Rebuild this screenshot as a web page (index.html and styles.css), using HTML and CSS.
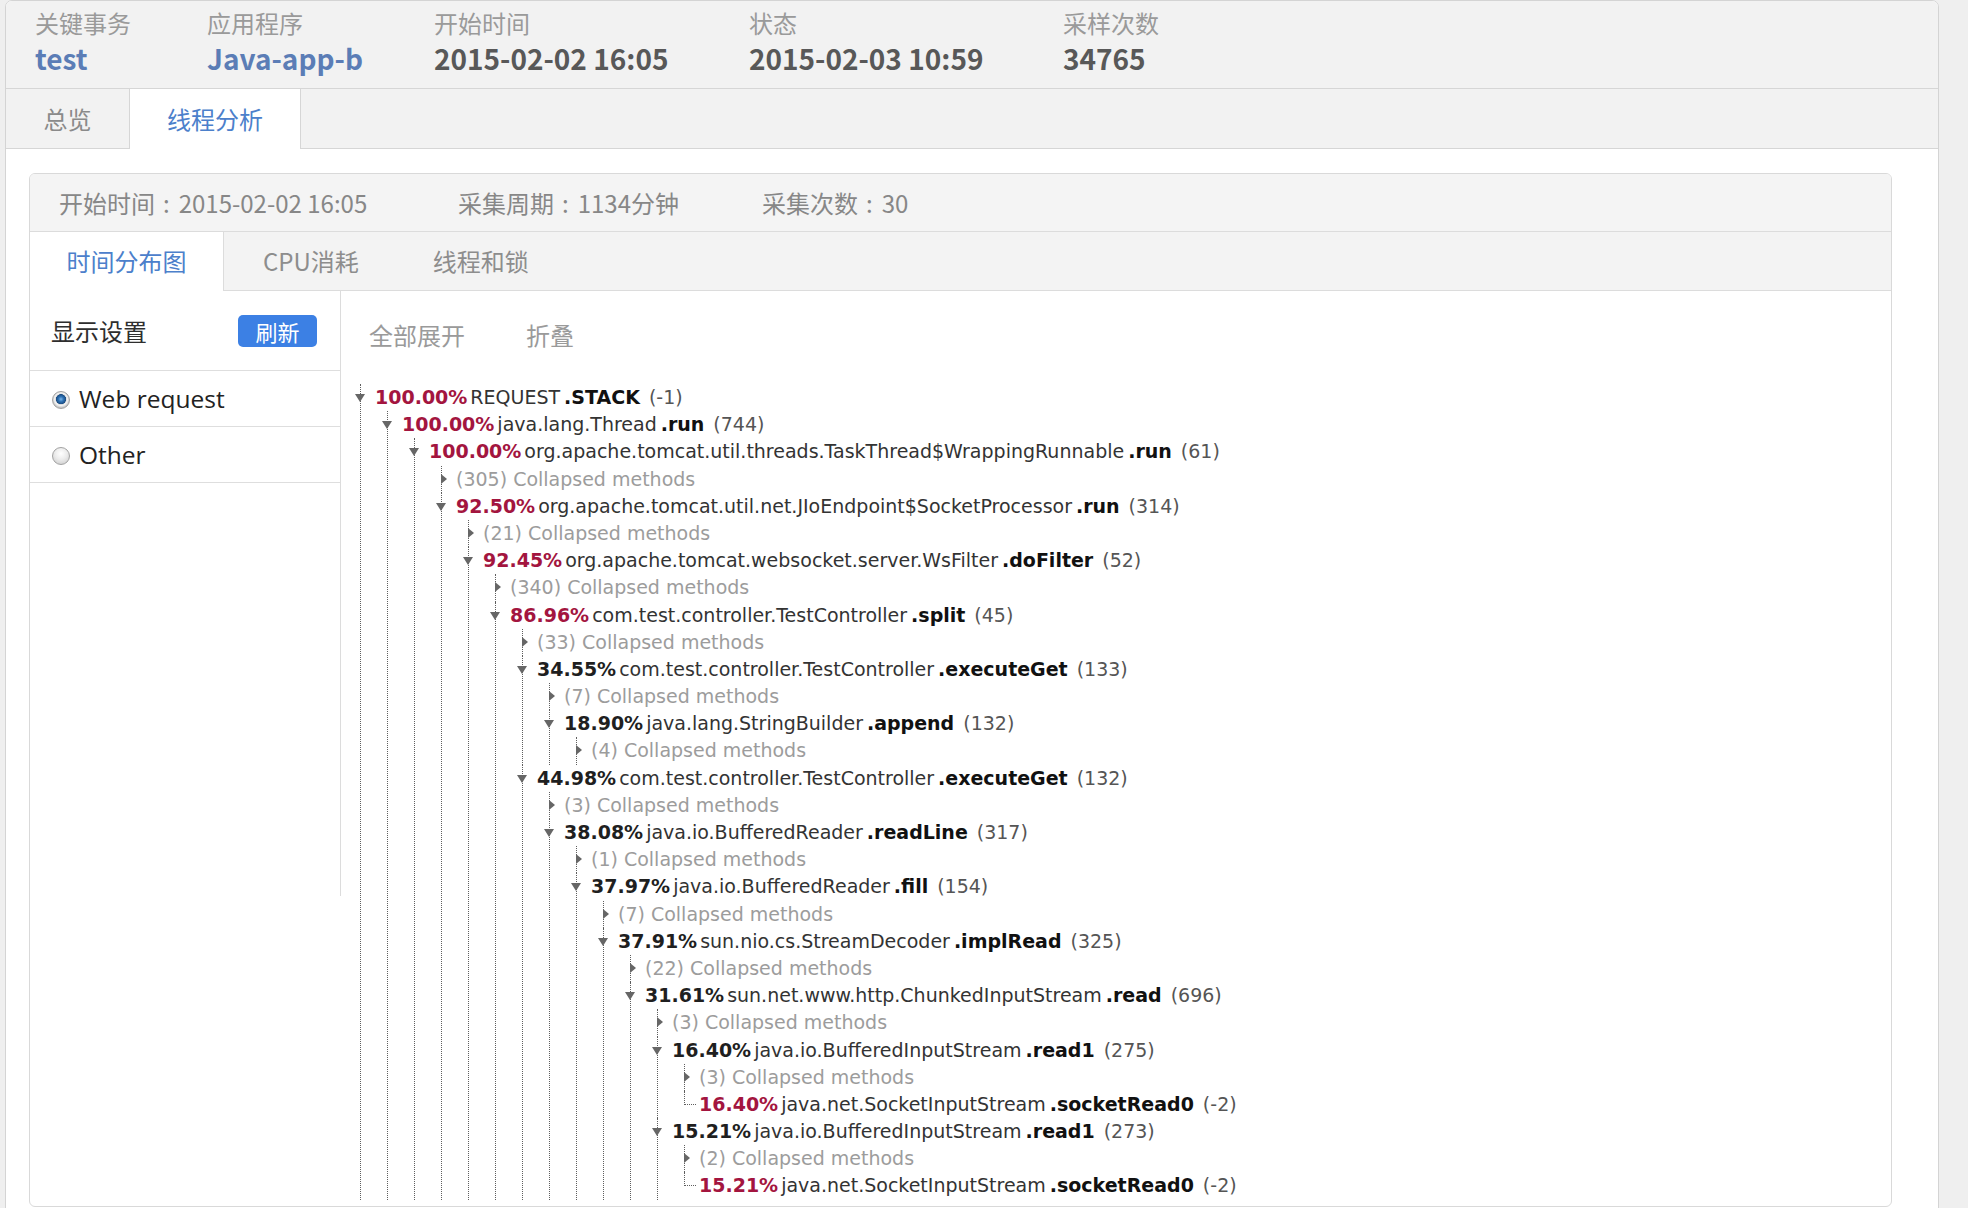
FILE: index.html
```html
<!DOCTYPE html>
<html lang="zh">
<head>
<meta charset="utf-8">
<title>线程分析</title>
<link rel="stylesheet" href="styles.css">
</head>
<body>
<div class="app">
  <div class="summary">
    <div class="sum-col c1"><div class="sum-label">关键事务</div><div class="sum-value link">test</div></div>
    <div class="sum-col c2"><div class="sum-label">应用程序</div><div class="sum-value link">Java-app-b</div></div>
    <div class="sum-col c3"><div class="sum-label">开始时间</div><div class="sum-value">2015-02-02 16:05</div></div>
    <div class="sum-col c4"><div class="sum-label">状态</div><div class="sum-value">2015-02-03 10:59</div></div>
    <div class="sum-col c5"><div class="sum-label">采样次数</div><div class="sum-value">34765</div></div>
  </div>
  <div class="tabs">
    <div class="tab t1">总览</div>
    <div class="tab t2 active">线程分析</div>
  </div>
  <div class="content">
    <div class="panel">
      <div class="info">
        <span class="info-item i1">开始时间<span class="sep">:</span>2015-02-02 16:05</span>
        <span class="info-item i2">采集周期<span class="sep">:</span>1134分钟</span>
        <span class="info-item">采集次数<span class="sep">:</span>30</span>
      </div>
      <div class="subtabs">
        <div class="subtab active">时间分布图</div>
        <div class="subtab first">CPU消耗</div>
        <div class="subtab">线程和锁</div>
      </div>
      <div class="pbody">
        <div class="side">
          <div class="side-head"><span class="side-title">显示设置</span><span class="btn">刷新</span></div>
          <div class="opt"><span class="radio on"></span><span class="opt-text">Web request</span></div>
          <div class="opt"><span class="radio"></span><span class="opt-text">Other</span></div>
        </div>
        <div class="main">
          <div class="toolbar"><span>全部展开</span><span>折叠</span></div>
          <ul class="tree">
            <li><div class="row"><i class="tw dn"></i><b class="pct r">100.00%</b><span class="cls">REQUEST</span><b class="mth">.STACK</b><span class="cnt">(-1)</span></div>
              <ul>
                <li><div class="row"><i class="tw dn"></i><b class="pct r">100.00%</b><span class="cls">java.lang.Thread</span><b class="mth">.run</b><span class="cnt">(744)</span></div>
                  <ul>
                    <li><div class="row"><i class="tw dn"></i><b class="pct r">100.00%</b><span class="cls">org.apache.tomcat.util.threads.TaskThread$WrappingRunnable</span><b class="mth">.run</b><span class="cnt">(61)</span></div>
                      <ul>
                        <li><div class="row"><i class="tw rt"></i><span class="col">(305) Collapsed methods</span></div></li>
                        <li><div class="row"><i class="tw dn"></i><b class="pct r">92.50%</b><span class="cls">org.apache.tomcat.util.net.JIoEndpoint$SocketProcessor</span><b class="mth">.run</b><span class="cnt">(314)</span></div>
                          <ul>
                            <li><div class="row"><i class="tw rt"></i><span class="col">(21) Collapsed methods</span></div></li>
                            <li><div class="row"><i class="tw dn"></i><b class="pct r">92.45%</b><span class="cls">org.apache.tomcat.websocket.server.WsFilter</span><b class="mth">.doFilter</b><span class="cnt">(52)</span></div>
                              <ul>
                                <li><div class="row"><i class="tw rt"></i><span class="col">(340) Collapsed methods</span></div></li>
                                <li><div class="row"><i class="tw dn"></i><b class="pct r">86.96%</b><span class="cls">com.test.controller.TestController</span><b class="mth">.split</b><span class="cnt">(45)</span></div>
                                  <ul>
                                    <li><div class="row"><i class="tw rt"></i><span class="col">(33) Collapsed methods</span></div></li>
                                    <li><div class="row"><i class="tw dn"></i><b class="pct">34.55%</b><span class="cls">com.test.controller.TestController</span><b class="mth">.executeGet</b><span class="cnt">(133)</span></div>
                                      <ul>
                                        <li><div class="row"><i class="tw rt"></i><span class="col">(7) Collapsed methods</span></div></li>
                                        <li><div class="row"><i class="tw dn"></i><b class="pct">18.90%</b><span class="cls">java.lang.StringBuilder</span><b class="mth">.append</b><span class="cnt">(132)</span></div>
                                          <ul>
                                            <li><div class="row"><i class="tw rt"></i><span class="col">(4) Collapsed methods</span></div></li>
                                          </ul>
                                        </li>
                                      </ul>
                                    </li>
                                    <li><div class="row"><i class="tw dn"></i><b class="pct">44.98%</b><span class="cls">com.test.controller.TestController</span><b class="mth">.executeGet</b><span class="cnt">(132)</span></div>
                                      <ul>
                                        <li><div class="row"><i class="tw rt"></i><span class="col">(3) Collapsed methods</span></div></li>
                                        <li><div class="row"><i class="tw dn"></i><b class="pct">38.08%</b><span class="cls">java.io.BufferedReader</span><b class="mth">.readLine</b><span class="cnt">(317)</span></div>
                                          <ul>
                                            <li><div class="row"><i class="tw rt"></i><span class="col">(1) Collapsed methods</span></div></li>
                                            <li><div class="row"><i class="tw dn"></i><b class="pct">37.97%</b><span class="cls">java.io.BufferedReader</span><b class="mth">.fill</b><span class="cnt">(154)</span></div>
                                              <ul>
                                                <li><div class="row"><i class="tw rt"></i><span class="col">(7) Collapsed methods</span></div></li>
                                                <li><div class="row"><i class="tw dn"></i><b class="pct">37.91%</b><span class="cls">sun.nio.cs.StreamDecoder</span><b class="mth">.implRead</b><span class="cnt">(325)</span></div>
                                                  <ul>
                                                    <li><div class="row"><i class="tw rt"></i><span class="col">(22) Collapsed methods</span></div></li>
                                                    <li><div class="row"><i class="tw dn"></i><b class="pct">31.61%</b><span class="cls">sun.net.www.http.ChunkedInputStream</span><b class="mth">.read</b><span class="cnt">(696)</span></div>
                                                      <ul>
                                                        <li><div class="row"><i class="tw rt"></i><span class="col">(3) Collapsed methods</span></div></li>
                                                        <li><div class="row"><i class="tw dn"></i><b class="pct">16.40%</b><span class="cls">java.io.BufferedInputStream</span><b class="mth">.read1</b><span class="cnt">(275)</span></div>
                                                          <ul>
                                                            <li><div class="row"><i class="tw rt"></i><span class="col">(3) Collapsed methods</span></div></li>
                                                            <li class="end"><div class="row"><b class="pct r">16.40%</b><span class="cls">java.net.SocketInputStream</span><b class="mth">.socketRead0</b><span class="cnt">(-2)</span></div></li>
                                                          </ul>
                                                        </li>
                                                        <li><div class="row"><i class="tw dn"></i><b class="pct">15.21%</b><span class="cls">java.io.BufferedInputStream</span><b class="mth">.read1</b><span class="cnt">(273)</span></div>
                                                          <ul>
                                                            <li><div class="row"><i class="tw rt"></i><span class="col">(2) Collapsed methods</span></div></li>
                                                            <li class="end"><div class="row"><b class="pct r">15.21%</b><span class="cls">java.net.SocketInputStream</span><b class="mth">.socketRead0</b><span class="cnt">(-2)</span></div></li>
                                                          </ul>
                                                        </li>
                                                      </ul>
                                                    </li>
                                                  </ul>
                                                </li>
                                              </ul>
                                            </li>
                                          </ul>
                                        </li>
                                      </ul>
                                    </li>
                                  </ul>
                                </li>
                              </ul>
                            </li>
                          </ul>
                        </li>
                      </ul>
                    </li>
                  </ul>
                </li>
              </ul>
            </li>
          </ul>
        </div>
      </div>
    </div>
  </div>
</div>
</body>
</html>
```

FILE: styles.css
```css
* { box-sizing: border-box; }
html, body { margin: 0; padding: 0; height: 100%; overflow: hidden; }
body {
  background: #efefef;
  font-family: "Noto Sans CJK SC", "Microsoft YaHei", sans-serif;
}
.app {
  margin-left: 5px;
  width: 1934px;
  height: 1240px;
  background: #fff;
  border: 1px solid #d4d4d4;
  border-radius: 7px 7px 0 0;
  overflow: hidden;
}

/* summary header */
.summary {
  display: flex;
  height: 88px;
  background: #f2f2f2;
  border-bottom: 1px solid #d6d6d6;
  padding: 7px 0 0 29px;
}
.sum-col.c1 { width: 172px; }
.sum-col.c2 { width: 227px; }
.sum-col.c3 { width: 315px; }
.sum-col.c4 { width: 314px; }
.sum-label { font-size: 24px; line-height: 30px; color: #9a9a9a; }
.sum-value {
  font-size: 28px;
  line-height: 40px;
  font-weight: 700;
  color: #585858;
}
.sum-value.link { color: #5b7db6; }

/* main tabs */
.tabs {
  display: flex;
  height: 60px;
  background: #f2f2f2;
  border-bottom: 1px solid #d6d6d6;
}
.tab {
  height: 59px;
  line-height: 59px;
  text-align: center;
  font-size: 24px;
  color: #8a8a8a;
}
.tab.t1 { width: 123px; }
.tab.t2 { width: 172px; }
.tab.active {
  background: #fff;
  height: 60px;
  border-left: 1px solid #d6d6d6;
  border-right: 1px solid #d6d6d6;
  color: #4c80cb;
}

.content { padding: 24px 46px 0 23px; }
.panel {
  border: 1px solid #d9d9d9;
  border-radius: 6px;
  overflow: hidden;
  padding-bottom: 6px;
}
.info {
  display: flex;
  align-items: center;
  height: 58px;
  background: #f4f4f4;
  border-bottom: 1px solid #dcdcdc;
  padding-left: 29px;
  font-size: 24px;
  color: #878787;
  white-space: nowrap;
}
.info-item.i1 { width: 399px; }
.info-item.i2 { width: 304px; }
.sep { margin: 0 9px 0 8px; }
.subtabs {
  display: flex;
  height: 59px;
  background: #f3f3f3;
  border-bottom: 1px solid #dcdcdc;
}
.subtab {
  line-height: 58px;
  padding: 0 37px;
  font-size: 24px;
  color: #8d8d8d;
}
.subtab.first { padding-left: 39px; }
.subtab.active {
  width: 194px;
  padding: 0;
  text-align: center;
  background: #fff;
  height: 59px;
  border-right: 1px solid #dcdcdc;
  color: #4c80cb;
}

.pbody { display: flex; align-items: flex-start; }
.side {
  width: 311px;
  height: 605px;
  border-right: 1px solid #dcdcdc;
}
.side-head {
  height: 80px;
  border-bottom: 1px solid #dedede;
  display: flex;
  align-items: center;
  justify-content: space-between;
  padding: 0 23px 0 21px;
}
.side-title { font-size: 24px; color: #2e2e2e; }
.btn {
  width: 79px;
  height: 32px;
  border-radius: 5px;
  background: #3c80e4;
  color: #fff;
  font-size: 22px;
  line-height: 32px;
  text-align: center;
}
.opt {
  height: 56px;
  border-bottom: 1px solid #dedede;
  display: flex;
  align-items: center;
  padding-left: 22px;
}
.radio {
  width: 18px;
  height: 18px;
  border-radius: 50%;
  border: 1px solid #a2a2a2;
  background: radial-gradient(circle at 50% 35%, #ffffff 0, #ececec 45%, #c6c6c6 100%);
  margin-right: 9px;
  margin-top: 3px;
}
.radio.on {
  background: radial-gradient(circle at 50% 45%, #7ab6ea 0, #2f72b4 2.5px, #1b4d83 4.8px, #dcdcdc 5.3px, #f4f4f4 6.3px, #c4c4c4 8.5px);
}
.opt-text {
  font-family: "Open Sans", "Noto Sans", sans-serif;
  font-size: 24.5px;
  color: #222;
}

.main { flex: 1; }
.toolbar {
  height: 86px;
  display: flex;
  align-items: center;
  gap: 61px;
  padding-left: 28px;
  font-size: 24px;
  color: #9a9a9a;
}

/* call tree */
.tree, .tree ul { list-style: none; margin: 0; padding: 0; }
.tree {
  margin-left: 19px;
  padding-top: 7px;
  font-family: "DejaVu Sans", Verdana, sans-serif;
  font-size: 19px;
}
.tree ul { margin-left: 26px; }
.tree li { border-left: 1px dotted #5e5e5e; }
.tree li.end { border-left-color: transparent; position: relative; }
.tree li.end::before {
  content: "";
  position: absolute;
  left: -1px;
  top: 0;
  height: 14px;
  border-left: 1px dotted #5e5e5e;
}
.tree li.end::after {
  content: "";
  position: absolute;
  left: 0;
  top: 13px;
  width: 11px;
  border-top: 1px dotted #5e5e5e;
}
.row {
  position: relative;
  height: 27.2px;
  line-height: 27.2px;
  padding-left: 14px;
  white-space: nowrap;
  color: #333;
}
.tw { position: absolute; width: 0; height: 0; }
.tw.dn {
  left: -6px;
  top: 10px;
  border-left: 5.5px solid transparent;
  border-right: 5.5px solid transparent;
  border-top: 8px solid #666;
}
.tw.rt {
  left: -1px;
  top: 8px;
  border-top: 5.5px solid transparent;
  border-bottom: 5.5px solid transparent;
  border-left: 6px solid #666;
}
.pct { font-weight: 700; color: #1f1f1f; margin-right: 3px; }
.pct.r { color: #a3153f; }
.cls { color: #333; }
.mth { font-weight: 700; color: #111; margin-left: 4px; }
.cnt { color: #555; margin-left: 9px; }
.col { color: #9c9c9c; }
```
